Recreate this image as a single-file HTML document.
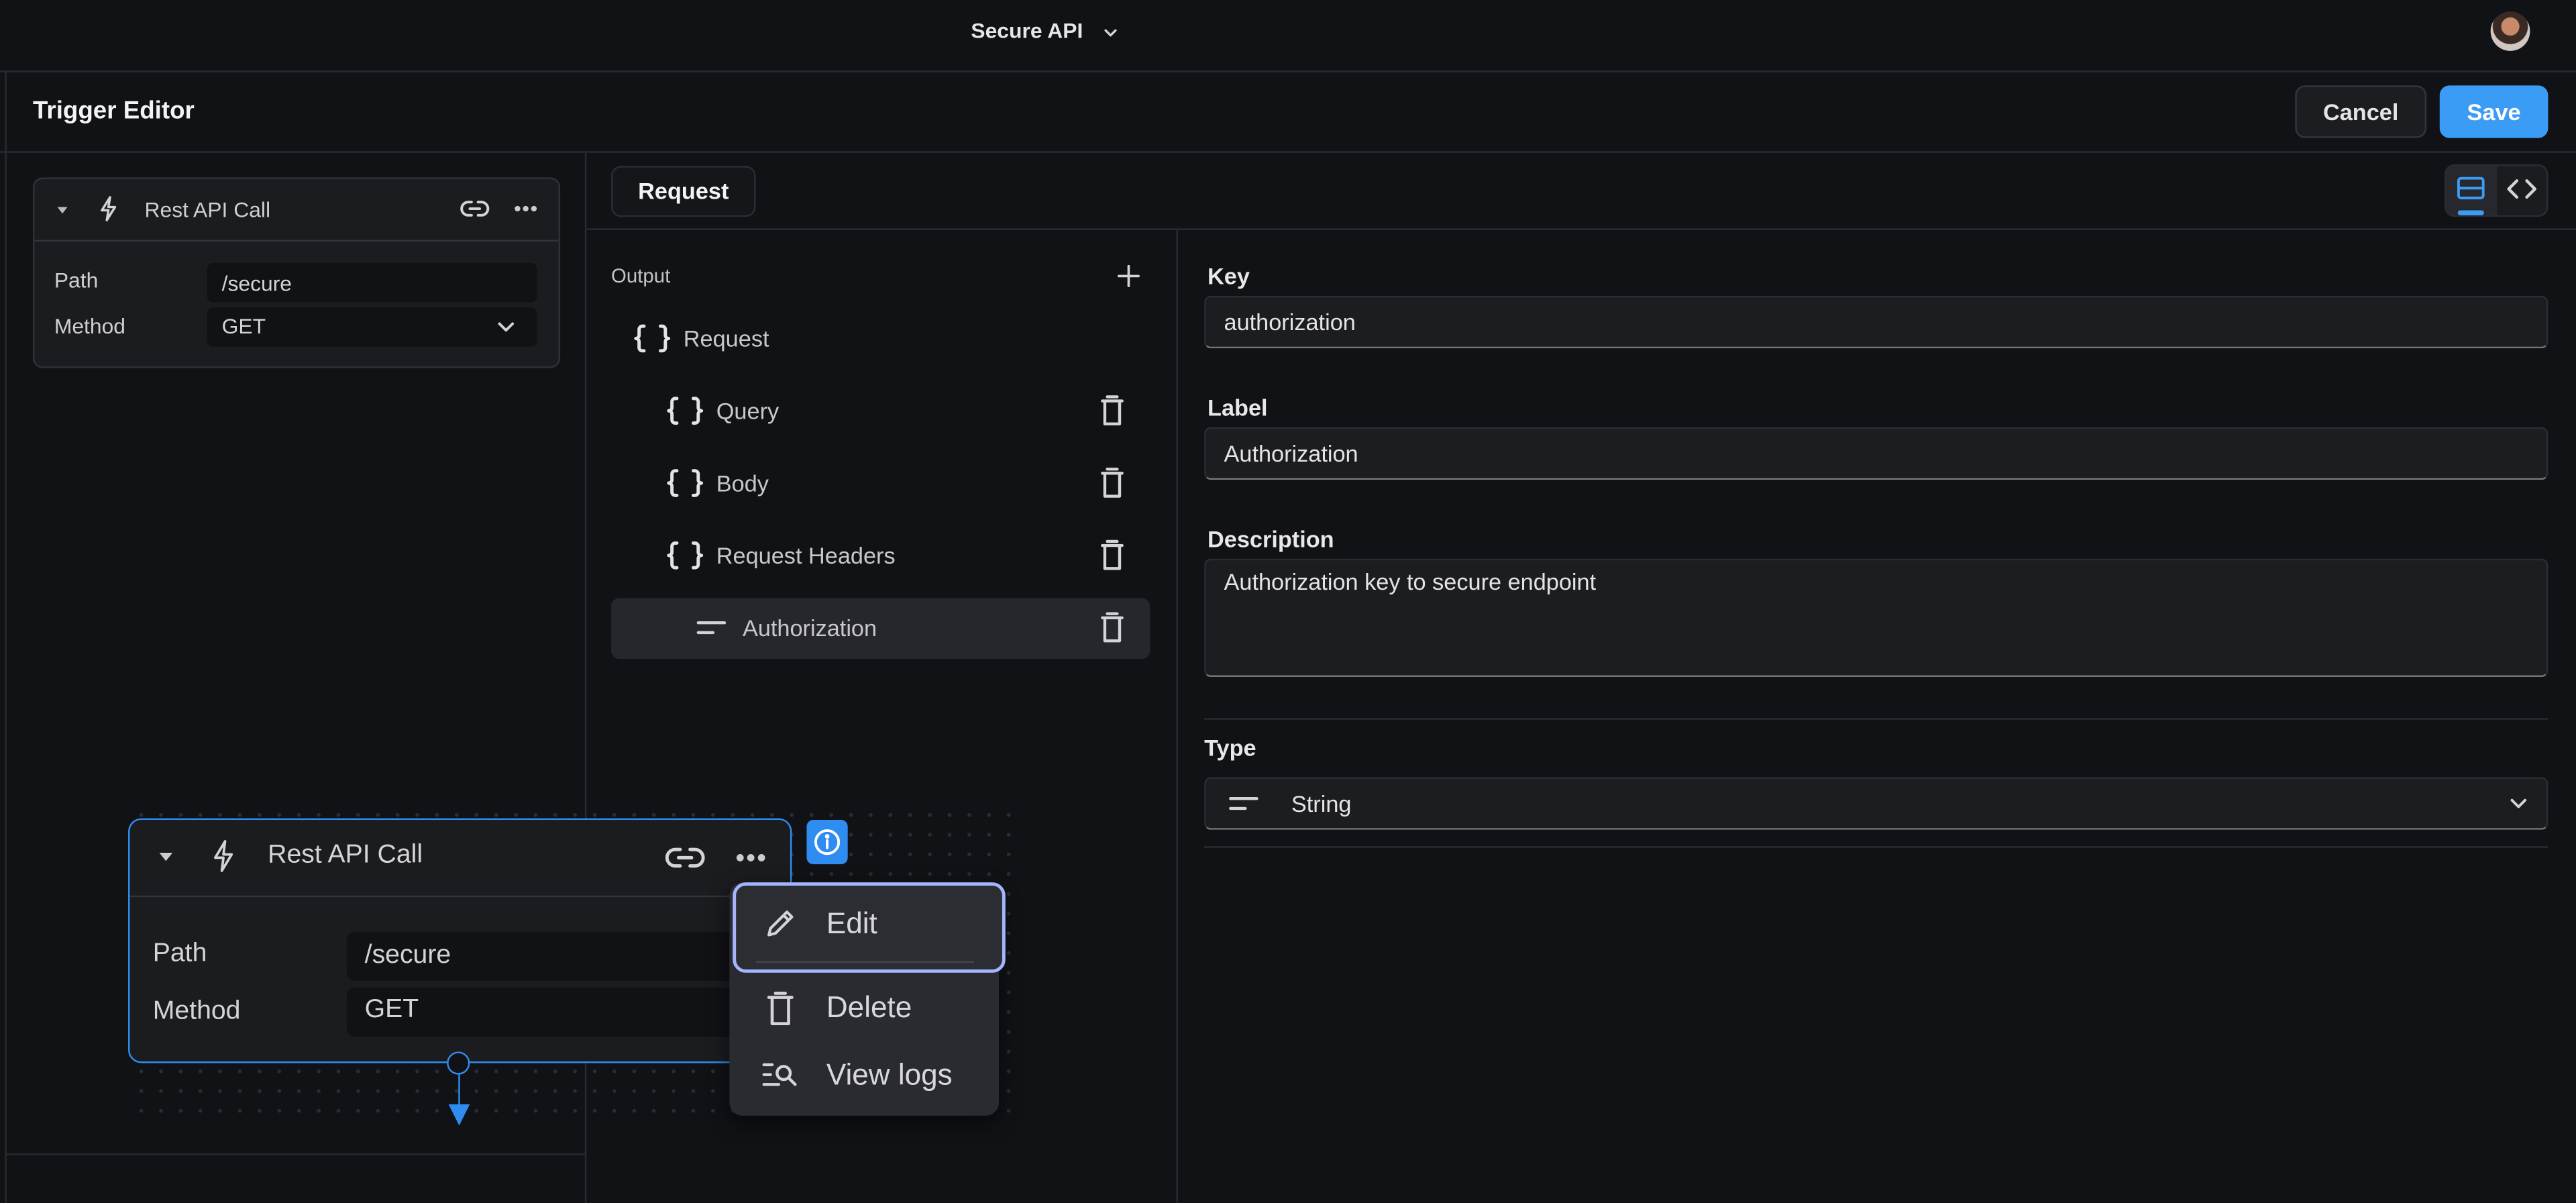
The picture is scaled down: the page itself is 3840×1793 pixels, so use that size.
<!DOCTYPE html>
<html><head><meta charset="utf-8"><style>
*{box-sizing:border-box;margin:0;padding:0}
html,body{width:3840px;height:1792px;overflow:hidden;background:#111216}
#w{position:absolute;left:0;top:0;width:1568px;height:732px;transform:scale(2.449);transform-origin:0 0;font-family:"Liberation Sans",sans-serif;color:#e4e4e7;background:#111216}
.a{position:absolute}
.ln{position:absolute;background:#2a2b30}
.t{position:absolute;white-space:nowrap}
.inp{position:absolute;background:#1c1d21;border:1px solid #2c2d32;border-bottom:1px solid #777;border-radius:4px;font-size:14px;padding:7px 11px;color:#e4e4e7}
.lbl{position:absolute;font-size:14px;font-weight:bold;color:#e8e8ea}
.ic{position:absolute;fill:none;stroke:#d4d4d8;stroke-width:1.8;stroke-linecap:round;stroke-linejoin:round}
.dots{position:absolute;background-image:radial-gradient(circle,#2a2c33 1px,transparent 1.3px);background-size:12px 12px}
</style></head><body><div id="w">
<svg width="0" height="0" style="position:absolute"><defs><symbol id="br" viewBox="0 0 22 18"><path d="M6 1.5H5a2 2 0 00-2 2v3.5a2 2 0 01-2 2 2 2 0 012 2v3.5a2 2 0 002 2h1M16 1.5h1a2 2 0 012 2v3.5a2 2 0 002 2 2 2 0 00-2 2v3.5a2 2 0 01-2 2h-1" fill="none" stroke="#e4e4e7" stroke-width="2" stroke-linecap="round" stroke-linejoin="round"/></symbol></defs></svg>
<!-- top bar -->
<div class="t" style="left:591px;top:11px;font-size:13px;font-weight:bold;color:#e6e6e6">Secure API</div>
<svg class="ic" style="left:671px;top:15px;width:10px;height:10px;stroke-width:1.4" viewBox="0 0 10 10"><path d="M2 3.5l3 3 3-3"/></svg>
<div class="a" style="left:1516px;top:7px;width:24px;height:24px;border-radius:50%;background:radial-gradient(circle at 50% 38%,#c98a6a 0 28%,#3a2a25 30% 55%,#d0c8c0 57%)"></div>
<div class="ln" style="left:0;top:43px;width:1568px;height:1px"></div>
<div class="ln" style="left:3px;top:44px;width:1px;height:688px"></div>
<!-- header -->
<div class="t" style="left:20px;top:59px;font-size:15px;font-weight:bold;color:#f4f4f5">Trigger Editor</div>
<div class="a" style="left:1397px;top:52px;width:80px;height:32px;border:1px solid #34353a;background:#1c1d21;border-radius:6px;font-size:14px;font-weight:bold;text-align:center;line-height:30px">Cancel</div>
<div class="a" style="left:1485px;top:52px;width:66px;height:32px;background:#3b9cf5;border-radius:6px;font-size:14px;font-weight:bold;text-align:center;line-height:32px;color:#fff">Save</div>
<div class="ln" style="left:0;top:92px;width:1568px;height:1px"></div>
<!-- left panel -->
<div class="ln" style="left:356px;top:93px;width:1px;height:639px"></div>
<div class="ln" style="left:4px;top:702px;width:352px;height:1px"></div>
<div class="a" style="left:20px;top:108px;width:321px;height:116px;background:#1b1c20;border:1px solid #303136;border-radius:6px"></div>
<div class="ln" style="left:21px;top:146px;width:319px;height:1px;background:#33343a"></div>
<svg class="a" style="left:34px;top:124px;width:8px;height:8px" viewBox="0 0 8 8"><path d="M1 2h6L4 6z" fill="#bbb"/></svg>
<svg class="ic" style="left:58px;top:119px;width:16px;height:16px;stroke-width:1.4" viewBox="0 0 16 16"><path d="M9 1L4 9h4l-1 6 5-8H8z"/></svg>
<div class="t" style="left:88px;top:120px;font-size:13px;color:#cfcfd3">Rest API Call</div>
<svg class="ic" style="left:280px;top:119px;width:18px;height:16px;stroke-width:1.6" viewBox="0 0 18 16"><path d="M7 4H5a4 4 0 000 8h2M11 4h2a4 4 0 010 8h-2M6 8h6"/></svg>
<svg class="a" style="left:312px;top:124px;width:16px;height:6px" viewBox="0 0 16 6"><circle cx="3" cy="3" r="1.7" fill="#ccc"/><circle cx="8" cy="3" r="1.7" fill="#ccc"/><circle cx="13" cy="3" r="1.7" fill="#ccc"/></svg>
<div class="t" style="left:33px;top:163px;font-size:13px;color:#cfcfd3">Path</div>
<div class="t" style="left:33px;top:191px;font-size:13px;color:#cfcfd3">Method</div>
<div class="a" style="left:126px;top:160px;width:201px;height:24px;background:#111216;border-radius:4px;font-size:13px;padding:5px 9px;color:#d4d4d8">/secure</div>
<div class="a" style="left:126px;top:187px;width:201px;height:24px;background:#111216;border-radius:4px;font-size:13px;padding:4px 9px;color:#d4d4d8">GET</div>
<svg class="ic" style="left:302px;top:193px;width:12px;height:12px;stroke-width:1.6" viewBox="0 0 12 12"><path d="M2 4l4 4 4-4"/></svg>
<!-- middle -->
<div class="a" style="left:372px;top:101px;width:88px;height:31px;border:1px solid #2c2d32;border-radius:6px;background:#15161a;font-size:14px;font-weight:bold;text-align:center;line-height:29px;color:#f4f4f5">Request</div>
<div class="ln" style="left:357px;top:139px;width:1211px;height:1px"></div>
<div class="a" style="left:1488px;top:100px;width:63px;height:32px;border:1px solid #2c2d32;border-radius:6px;background:#1b1c20"></div>
<div class="a" style="left:1489px;top:101px;width:31px;height:30px;background:#26282e;border-radius:5px 0 0 5px"></div>
<svg class="ic" style="left:1495px;top:107px;width:18px;height:16px;stroke:#3b9cf5;stroke-width:1.6" viewBox="0 0 18 16"><rect x="1.5" y="1.5" width="15" height="12" rx="1.5"/><path d="M1.5 7.5h15"/></svg>
<div class="a" style="left:1496px;top:128px;width:16px;height:3px;background:#3b9cf5;border-radius:2px"></div>
<svg class="ic" style="left:1525px;top:107px;width:20px;height:16px;stroke-width:1.8" viewBox="0 0 20 16"><path d="M7 3L2 8l5 5M13 3l5 5-5 5"/></svg>
<div class="ln" style="left:716px;top:140px;width:1px;height:592px"></div>
<div class="t" style="left:372px;top:161px;font-size:12px;color:#c4c4c8">Output</div>
<svg class="ic" style="left:680px;top:161px;width:14px;height:14px;stroke-width:1.5" viewBox="0 0 14 14"><path d="M7 1v12M1 7h12"/></svg>
<div class="a" style="left:372px;top:364px;width:328px;height:37px;background:#26272c;border-radius:5px"></div>
<svg class="a" style="left:386px;top:197px;width:22px;height:18px"><use href="#br"/></svg>
<div class="t" style="left:416px;top:198px;font-size:14px;color:#c8c8cc">Request</div>
<svg class="a" style="left:406px;top:241px;width:22px;height:18px"><use href="#br"/></svg>
<div class="t" style="left:436px;top:242px;font-size:14px;color:#c8c8cc">Query</div>
<svg class="a" style="left:406px;top:285px;width:22px;height:18px"><use href="#br"/></svg>
<div class="t" style="left:436px;top:286px;font-size:14px;color:#c8c8cc">Body</div>
<svg class="a" style="left:406px;top:329px;width:22px;height:18px"><use href="#br"/></svg>
<div class="t" style="left:436px;top:330px;font-size:14px;color:#c8c8cc">Request Headers</div>
<svg class="ic" style="left:424px;top:377px;width:18px;height:10px;stroke-width:1.8" viewBox="0 0 18 10"><path d="M1 2h16M1 8h9"/></svg>
<div class="t" style="left:452px;top:374px;font-size:14px;color:#c8c8cc">Authorization</div>
<svg class="ic" style="left:669px;top:240px;width:16px;height:20px" viewBox="0 0 16 20"><path d="M2 4h12M5 1.5h6M3.5 4v14h9V4"/></svg>
<svg class="ic" style="left:669px;top:284px;width:16px;height:20px" viewBox="0 0 16 20"><path d="M2 4h12M5 1.5h6M3.5 4v14h9V4"/></svg>
<svg class="ic" style="left:669px;top:328px;width:16px;height:20px" viewBox="0 0 16 20"><path d="M2 4h12M5 1.5h6M3.5 4v14h9V4"/></svg>
<svg class="ic" style="left:669px;top:372px;width:16px;height:20px" viewBox="0 0 16 20"><path d="M2 4h12M5 1.5h6M3.5 4v14h9V4"/></svg>
<!-- right -->
<div class="lbl" style="left:735px;top:160px">Key</div>
<div class="inp" style="left:733px;top:180px;width:818px;height:32px">authorization</div>
<div class="lbl" style="left:735px;top:240px">Label</div>
<div class="inp" style="left:733px;top:260px;width:818px;height:32px">Authorization</div>
<div class="lbl" style="left:735px;top:320px">Description</div>
<div class="inp" style="left:733px;top:340px;width:818px;height:72px;padding-top:5px">Authorization key to secure endpoint</div>
<div class="ln" style="left:733px;top:437px;width:818px;height:1px"></div>
<div class="lbl" style="left:733px;top:447px">Type</div>
<div class="inp" style="left:733px;top:473px;width:818px;height:32px;padding-left:52px">String</div>
<svg class="ic" style="left:748px;top:484px;width:18px;height:10px;stroke-width:1.8" viewBox="0 0 18 10"><path d="M1 2h16M1 8h9"/></svg>
<svg class="ic" style="left:1527px;top:483px;width:12px;height:12px;stroke-width:1.6" viewBox="0 0 12 12"><path d="M2 4l4 4 4-4"/></svg>
<div class="ln" style="left:733px;top:515px;width:818px;height:1px"></div>
<!-- floating -->
<div class="dots" style="left:80px;top:490px;width:540px;height:196px"></div>
<div class="a" style="left:78px;top:498px;width:404px;height:149px;background:#1b1c20;border:1px solid #2f8cf0;border-radius:8px"></div>
<div class="ln" style="left:79px;top:545px;width:402px;height:1px;background:#34353a"></div>
<svg class="a" style="left:96px;top:518px;width:10px;height:8px" viewBox="0 0 10 8"><path d="M1 1h8L5 6z" fill="#ccc"/></svg>
<svg class="ic" style="left:127px;top:511px;width:18px;height:20px;stroke-width:1.5" viewBox="0 0 18 20"><path d="M10 1L4 11h5l-1 8 6-10H9z"/></svg>
<div class="t" style="left:163px;top:512px;font-size:16px;color:#d4d4d8">Rest API Call</div>
<svg class="ic" style="left:405px;top:513px;width:24px;height:18px;stroke-width:2" viewBox="0 0 24 18"><path d="M9 4H6a5 5 0 000 10h3M15 4h3a5 5 0 010 10h-3M8 9h8"/></svg>
<svg class="a" style="left:447px;top:518px;width:20px;height:8px" viewBox="0 0 20 8"><circle cx="3.5" cy="4" r="2.2" fill="#ccc"/><circle cx="10" cy="4" r="2.2" fill="#ccc"/><circle cx="16.5" cy="4" r="2.2" fill="#ccc"/></svg>
<div class="t" style="left:93px;top:572px;font-size:16px;color:#d4d4d8">Path</div>
<div class="t" style="left:93px;top:607px;font-size:16px;color:#d4d4d8">Method</div>
<div class="a" style="left:211px;top:567px;width:240px;height:30px;background:#111216;border-radius:5px;font-size:16px;padding:6px 11px;color:#d4d4d8">/secure</div>
<div class="a" style="left:211px;top:601px;width:240px;height:30px;background:#111216;border-radius:5px;font-size:16px;padding:5px 11px;color:#d4d4d8">GET</div>
<div class="a" style="left:272px;top:640px;width:14px;height:14px;border-radius:50%;border:1px solid #2f8cf0;background:#111216"></div>
<div class="a" style="left:279px;top:654px;width:1px;height:20px;background:#2f8cf0"></div>
<svg class="a" style="left:273px;top:672px;width:13px;height:13px" viewBox="0 0 13 13"><path d="M0 0h13L6.5 13z" fill="#2f8cf0"/></svg>
<div class="a" style="left:491px;top:499px;width:25px;height:27px;background:#2f8cf0;border-radius:4px"></div>
<svg class="ic" style="left:495px;top:504px;width:17px;height:17px;stroke:#fff;stroke-width:1.6" viewBox="0 0 17 17"><circle cx="8.5" cy="8.5" r="7"/><path d="M8.5 7.5v4.5"/><circle cx="8.5" cy="5" r=".6" fill="#fff"/></svg>
<!-- menu -->
<div class="a" style="left:444px;top:537px;width:164px;height:142px;background:#2a2b30;border-radius:8px;box-shadow:0 4px 12px rgba(0,0,0,.6)"></div>
<div class="a" style="left:446px;top:537px;width:166px;height:55px;border:2px solid #a5b4fc;border-radius:8px;background:#2c2d32"></div>
<div class="ln" style="left:460px;top:585px;width:133px;height:1px;background:#44454b"></div>
<svg class="ic" style="left:465px;top:552px;width:20px;height:20px;stroke-width:1.7" viewBox="0 0 20 20"><path d="M3 17l1-4L14 3l3 3L7 16zM12 5l3 3"/></svg>
<div class="t" style="left:503px;top:552px;font-size:18px;color:#d8d8dc">Edit</div>
<svg class="ic" style="left:466px;top:603px;width:18px;height:22px;stroke-width:1.9" viewBox="0 0 18 22"><path d="M2 4h14M6 1.5h6M4 4v16h10V4"/></svg>
<div class="t" style="left:503px;top:603px;font-size:18px;color:#d8d8dc">Delete</div>
<svg class="ic" style="left:464px;top:645px;width:22px;height:18px;stroke-width:1.8" viewBox="0 0 22 18"><path d="M1 3h5M1 9h4M1 15h9"/><circle cx="13" cy="8" r="4"/><path d="M16 11l4 4"/></svg>
<div class="t" style="left:503px;top:644px;font-size:18px;color:#d8d8dc">View logs</div>
</div></body></html>
